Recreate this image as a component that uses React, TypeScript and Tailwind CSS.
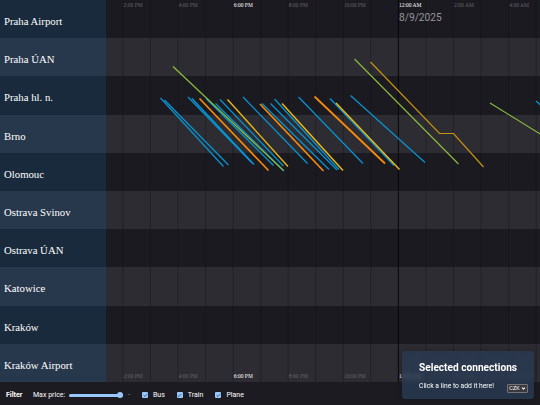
import { Check, ChevronDown } from 'lucide-react';

const stations = [
  'Praha Airport',
  'Praha ÚAN',
  'Praha hl. n.',
  'Brno',
  'Olomouc',
  'Ostrava Svinov',
  'Ostrava ÚAN',
  'Katowice',
  'Kraków',
  'Kraków Airport',
];

const hours = [
  { label: '2:00 PM', main: false },
  { label: '4:00 PM', main: false },
  { label: '6:00 PM', main: true },
  { label: '8:00 PM', main: false },
  { label: '10:00 PM', main: false },
  { label: '12:00 AM', main: true },
  { label: '2:00 AM', main: false },
  { label: '4:00 AM', main: false },
];

const BLUE = '#0795d2';
const GREEN = '#8bbd3e';
const ORANGE = '#f58a0b';
const YELLOW = '#efbb14';
const AMBER = '#c8930f';

const connections = [
  { points: '160.5,98 223.5,166.5', color: BLUE, width: 1.2 },
  { points: '164.5,100 228.5,165', color: BLUE, width: 1.2 },
  { points: '188,97 252,163', color: BLUE, width: 1.2 },
  { points: '192,98.5 254,164.5', color: BLUE, width: 1.4 },
  { points: '206,98.5 273.5,165.5', color: BLUE, width: 1.2 },
  { points: '215.5,103.5 284,171', color: BLUE, width: 1.2 },
  { points: '220,99.5 283.5,166', color: BLUE, width: 1.2 },
  { points: '173,66.5 283.5,170.5', color: GREEN, width: 1.2 },
  { points: '199.5,98.5 268.5,170.5', color: ORANGE, width: 1.7 },
  { points: '227.5,99.5 288,166.5', color: YELLOW, width: 1.3 },
  { points: '243,97 307.5,163.5', color: BLUE, width: 1.2 },
  { points: '262,103.5 329,169.5', color: BLUE, width: 1.2 },
  { points: '260,104 323.5,171', color: ORANGE, width: 1.7 },
  { points: '270.5,103.5 337,170', color: BLUE, width: 1.2 },
  { points: '274.5,99 339,169.5', color: BLUE, width: 1.2 },
  { points: '282,103.5 343,170.5', color: YELLOW, width: 1.4 },
  { points: '298.5,97 363,163.5', color: BLUE, width: 1.2 },
  { points: '314.5,96.5 385,163.5', color: ORANGE, width: 1.8 },
  { points: '330,98.5 394,165.5', color: BLUE, width: 1.3 },
  { points: '336,103 399.5,169.5', color: YELLOW, width: 1.4 },
  { points: '350.5,95.5 425,162.5', color: BLUE, width: 1.2 },
  { points: '354.5,59 458.5,164', color: GREEN, width: 1.1 },
  { points: '370.5,62 439.5,133.5 453.5,133.5 483.5,167', color: AMBER, width: 1.2 },
  { points: '490,103 541,134.5', color: GREEN, width: 1.1 },
  { points: '536,101 541,105.5', color: BLUE, width: 1.2 },
];

function TimeAxis() {
  return (
    <div className="flex pl-[17.5px] font-['Liberation_Serif',serif] text-[5.5px] leading-[8px] whitespace-nowrap">
      {hours.map((hour) => (
        <span
          key={hour.label}
          className={hour.main ? 'w-[55.1px] shrink-0 text-white' : 'w-[55.1px] shrink-0 text-[#66646a]'}
        >
          {hour.label}
        </span>
      ))}
    </div>
  );
}

function Chart() {
  return (
    <svg className="absolute inset-0" width="434" height="382" viewBox="106 0 434 382" fill="none">
      {Array.from({ length: 16 }, (_, i) => (
        <path
          key={i}
          d={`M${122.9 + i * 27.55} 0V382`}
          stroke={i === 10 ? '#08080a' : '#121116'}
          strokeOpacity={i === 10 ? 1 : 0.5}
          strokeWidth={i === 10 ? 1 : 0.7}
        />
      ))}
      {connections.map((line) => (
        <polyline key={line.points} points={line.points} stroke={line.color} strokeWidth={line.width} />
      ))}
    </svg>
  );
}

function Filter({ label }: { label: string }) {
  return (
    <label className="flex items-center gap-[5px]">
      <span className="flex size-[6px] items-center justify-center rounded-[1px] bg-[#99c8ff]">
        <Check className="size-[5px] text-[#15202e]" strokeWidth={3} />
      </span>
      {label}
    </label>
  );
}

export default function App() {
  return (
    <div className="relative flex h-[405px] w-[540px] flex-col overflow-hidden bg-[#1c1b22] font-[Roboto,sans-serif] text-white">
      <div className="flex h-[382px]">
        <div className="flex w-[106px] flex-col font-['Liberation_Serif',serif] text-[10.75px]">
          {stations.map((station, i) => (
            <div
              key={station}
              className={
                i % 2 ? 'flex flex-1 items-center bg-[#27384d] pt-[4px] pl-1' : 'flex flex-1 items-center bg-[#182a3c] pt-[4px] pl-1'
              }
            >
              {station}
            </div>
          ))}
        </div>
        <div className="relative flex flex-1 flex-col overflow-hidden">
          {stations.map((station, i) => (
            <div key={station} className={i % 2 ? 'flex-1 bg-[#2d2c32]' : 'flex-1 bg-[#1b1a21]'} />
          ))}
          <Chart />
          <div className="absolute inset-x-0 top-px">
            <TimeAxis />
            <p className="pt-[2px] pl-[293px] text-[10.2px] leading-[14px] text-[#96959b]">8/9/2025</p>
          </div>
          <div className="absolute inset-x-0 bottom-[2px]">
            <TimeAxis />
          </div>
        </div>
      </div>

      <div className="flex h-[23px] items-center pt-[3px] pl-[6px] text-[7px]">
        <span className="w-[27px] font-bold">Filter</span>
        <span className="w-[36px] whitespace-nowrap">Max price:</span>
        <span className="flex h-[3px] w-[54px] items-center justify-end rounded-full bg-[#99c8ff]">
          <span className="size-[6px] shrink-0 rounded-full bg-[#99c8ff]" />
        </span>
        <span className="w-[19px] pl-[5px] text-[#9a999f]">-</span>
        <div className="flex gap-[12px]">
          <Filter label="Bus" />
          <Filter label="Train" />
          <Filter label="Plane" />
        </div>
      </div>

      <div className="absolute right-[6px] bottom-[6px] h-[48px] w-[132px] rounded-[3px] bg-[#293b54]/80 pt-[10px] pl-[17px] shadow-[0_0_6px_rgba(0,0,0,0.25)] backdrop-blur-[2px]">
        <h2 className="text-[10.15px] leading-[13px] font-bold whitespace-nowrap">Selected connections</h2>
        <p className="pt-[7px] text-[6.75px] leading-[10px]">Click a line to add it here!</p>
        <button className="absolute right-[6px] bottom-[6px] flex h-[9px] w-[21px] items-center justify-center gap-px rounded-[1px] border-[0.5px] border-[#737378] bg-[#39393e] text-[5.5px]">
          CZK
          <ChevronDown className="size-[5px]" strokeWidth={5} />
        </button>
      </div>
    </div>
  );
}
